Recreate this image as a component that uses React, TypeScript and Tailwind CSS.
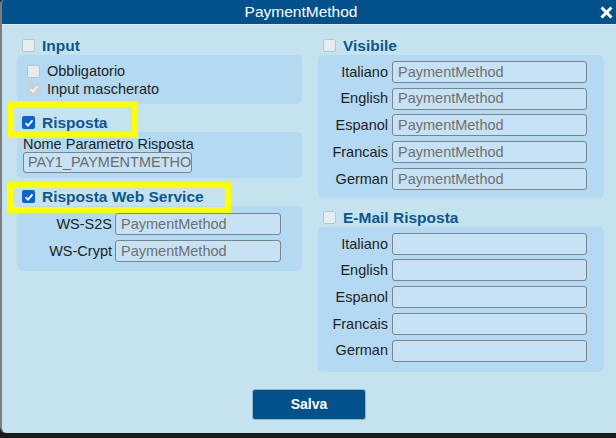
import React from "react";

const font = { fontFamily: '"Liberation Sans", Arial, sans-serif' };

function Box({ state }: { state: "off" | "on" | "dis" }) {
  if (state === "on")
    return (
      <span className="w-[13px] h-[13px] rounded-[2px] bg-[#0b63d0] flex items-center justify-center shrink-0">
        <svg width="10" height="10" viewBox="0 0 10 10">
          <path d="M1.6 5.2 L4 7.6 L8.5 2.4" fill="none" stroke="#fff" strokeWidth="1.9" />
        </svg>
      </span>
    );
  if (state === "dis")
    return (
      <span className="w-[13px] h-[13px] rounded-[2px] bg-[#c7d1d6] flex items-center justify-center shrink-0">
        <svg width="10" height="10" viewBox="0 0 10 10">
          <path d="M1.6 5.2 L4 7.6 L8.5 2.4" fill="none" stroke="#eef3f5" strokeWidth="1.9" />
        </svg>
      </span>
    );
  return <span className="w-[13px] h-[13px] rounded-[2px] bg-[#e6edf0] border border-[#b9c5cb] shrink-0" />;
}

function Header({ label, state }: { label: string; state: "off" | "on" }) {
  return (
    <div className="h-[19px] flex items-center pl-[5px]">
      <Box state={state} />
      <span className="ml-[7px] text-[15.5px] font-bold text-[#0d5690] leading-none">{label}</span>
    </div>
  );
}

function Field({ value, width }: { value: string; width: string }) {
  return (
    <div
      className={`${width} h-[22px] rounded-[3px] border border-[#7c858b] bg-[#c6e2f4] pl-[5px] flex items-center overflow-hidden whitespace-nowrap text-[14.5px] text-[#707070] leading-none`}
    >
      {value}
    </div>
  );
}

function LangPanel({ value, pb }: { value: string; pb: string }) {
  const langs = ["Italiano", "English", "Espanol", "Francais", "German"];
  return (
    <div className={`bg-[#b4daf3] rounded-[5px] pt-[6px] ${pb} flex flex-col gap-[4.7px]`}>
      {langs.map((l) => (
        <div key={l} className="flex items-center h-[22px]">
          <span className="w-[70px] text-right text-[14.5px] text-[#222] leading-none">{l}</span>
          <div className="ml-[4px]">
            <Field value={value} width="w-[195px]" />
          </div>
        </div>
      ))}
    </div>
  );
}

export default function App() {
  return (
    <div className="w-[616px] h-[438px] bg-[#1b1b1b] relative overflow-hidden" style={font}>
      <div className="h-[433px] flex flex-col border-l-2 border-[#7d7d7d] rounded-bl-[6px] rounded-tl-[4px] overflow-hidden bg-[#c5e3ee]">
        {/* title bar */}
        <div className="h-[24px] bg-[#02518a] flex items-center border-b border-[#d9eef6] box-content shrink-0">
          <div className="flex-1 text-center text-white text-[15.5px] leading-none">PaymentMethod</div>
          <div className="w-[13px] mr-[3px] flex items-center justify-center">
            <svg width="13" height="13" viewBox="0 0 13 13">
              <path d="M1.5 1.5 L11.5 11.5 M11.5 1.5 L1.5 11.5" stroke="#fff" strokeWidth="3" />
            </svg>
          </div>
        </div>

        {/* body */}
        <div className="flex-1 flex flex-col pt-[11px]">
          <div className="flex pl-[15px]">
            {/* left column */}
            <div className="w-[285px] flex flex-col">
              <Header label="Input" state="off" />
              <div className="bg-[#b4daf3] rounded-[5px] pt-[7px] pb-[6px] pl-[10px] flex flex-col">
                <div className="h-[18px] flex items-center">
                  <Box state="off" />
                  <span className="ml-[7px] text-[14.5px] text-[#222] leading-none">Obbligatorio</span>
                </div>
                <div className="h-[18px] flex items-center">
                  <Box state="dis" />
                  <span className="ml-[7px] text-[14.5px] text-[#222] leading-none">Input mascherato</span>
                </div>
              </div>

              <div className="mt-[9px]">
                <Header label="Risposta" state="on" />
              </div>
              <div className="bg-[#b4daf3] rounded-[5px] pt-[4px] pb-[5px] pl-[6px] flex flex-col">
                <div className="h-[16px] flex items-center text-[14.5px] text-[#222] leading-none">
                  Nome Parametro Risposta
                </div>
                <div className="h-[21px] w-[169px] rounded-[3px] border border-[#7c858b] bg-[#c6e2f4] pl-[4px] flex items-center overflow-hidden whitespace-nowrap text-[14.5px] text-[#6c6c6c] leading-none">
                  PAY1_PAYMENTMETHO
                </div>
              </div>

              <div className="mt-[9px]">
                <Header label="Risposta Web Service" state="on" />
              </div>
              <div className="bg-[#b4daf3] rounded-[5px] pt-[7px] pb-[9px] flex flex-col gap-[5px]">
                {["WS-S2S", "WS-Crypt"].map((l) => (
                  <div key={l} className="flex items-center h-[22px]">
                    <span className="w-[95px] text-right text-[14.5px] text-[#222] leading-none">{l}</span>
                    <div className="ml-[3px]">
                      <Field value="PaymentMethod" width="w-[166px]" />
                    </div>
                  </div>
                ))}
              </div>
            </div>

            {/* right column */}
            <div className="w-[286px] ml-[16px] flex flex-col">
              <Header label="Visibile" state="off" />
              <LangPanel value="PaymentMethod" pb="pb-[8px]" />
              <div className="mt-[10px]">
                <Header label="E-Mail Risposta" state="off" />
              </div>
              <LangPanel value="" pb="pb-[10px]" />
            </div>
          </div>

          <div className="flex justify-center mt-[17px]">
            <button className="w-[114px] h-[31px] rounded-[3px] bg-[#02518a] border border-[#8fb6cf] text-white font-bold text-[14px] leading-none">
              Salva
            </button>
          </div>
        </div>
      </div>

      {/* yellow highlight annotations */}
      <div className="absolute left-[8px] top-[101px] w-[130px] h-[37px] border-[6px] border-[#ffff00]" />
      <div className="absolute left-[7px] top-[182px] w-[224px] h-[31px] border-[6px] border-[#ffff00]" />
    </div>
  );
}
